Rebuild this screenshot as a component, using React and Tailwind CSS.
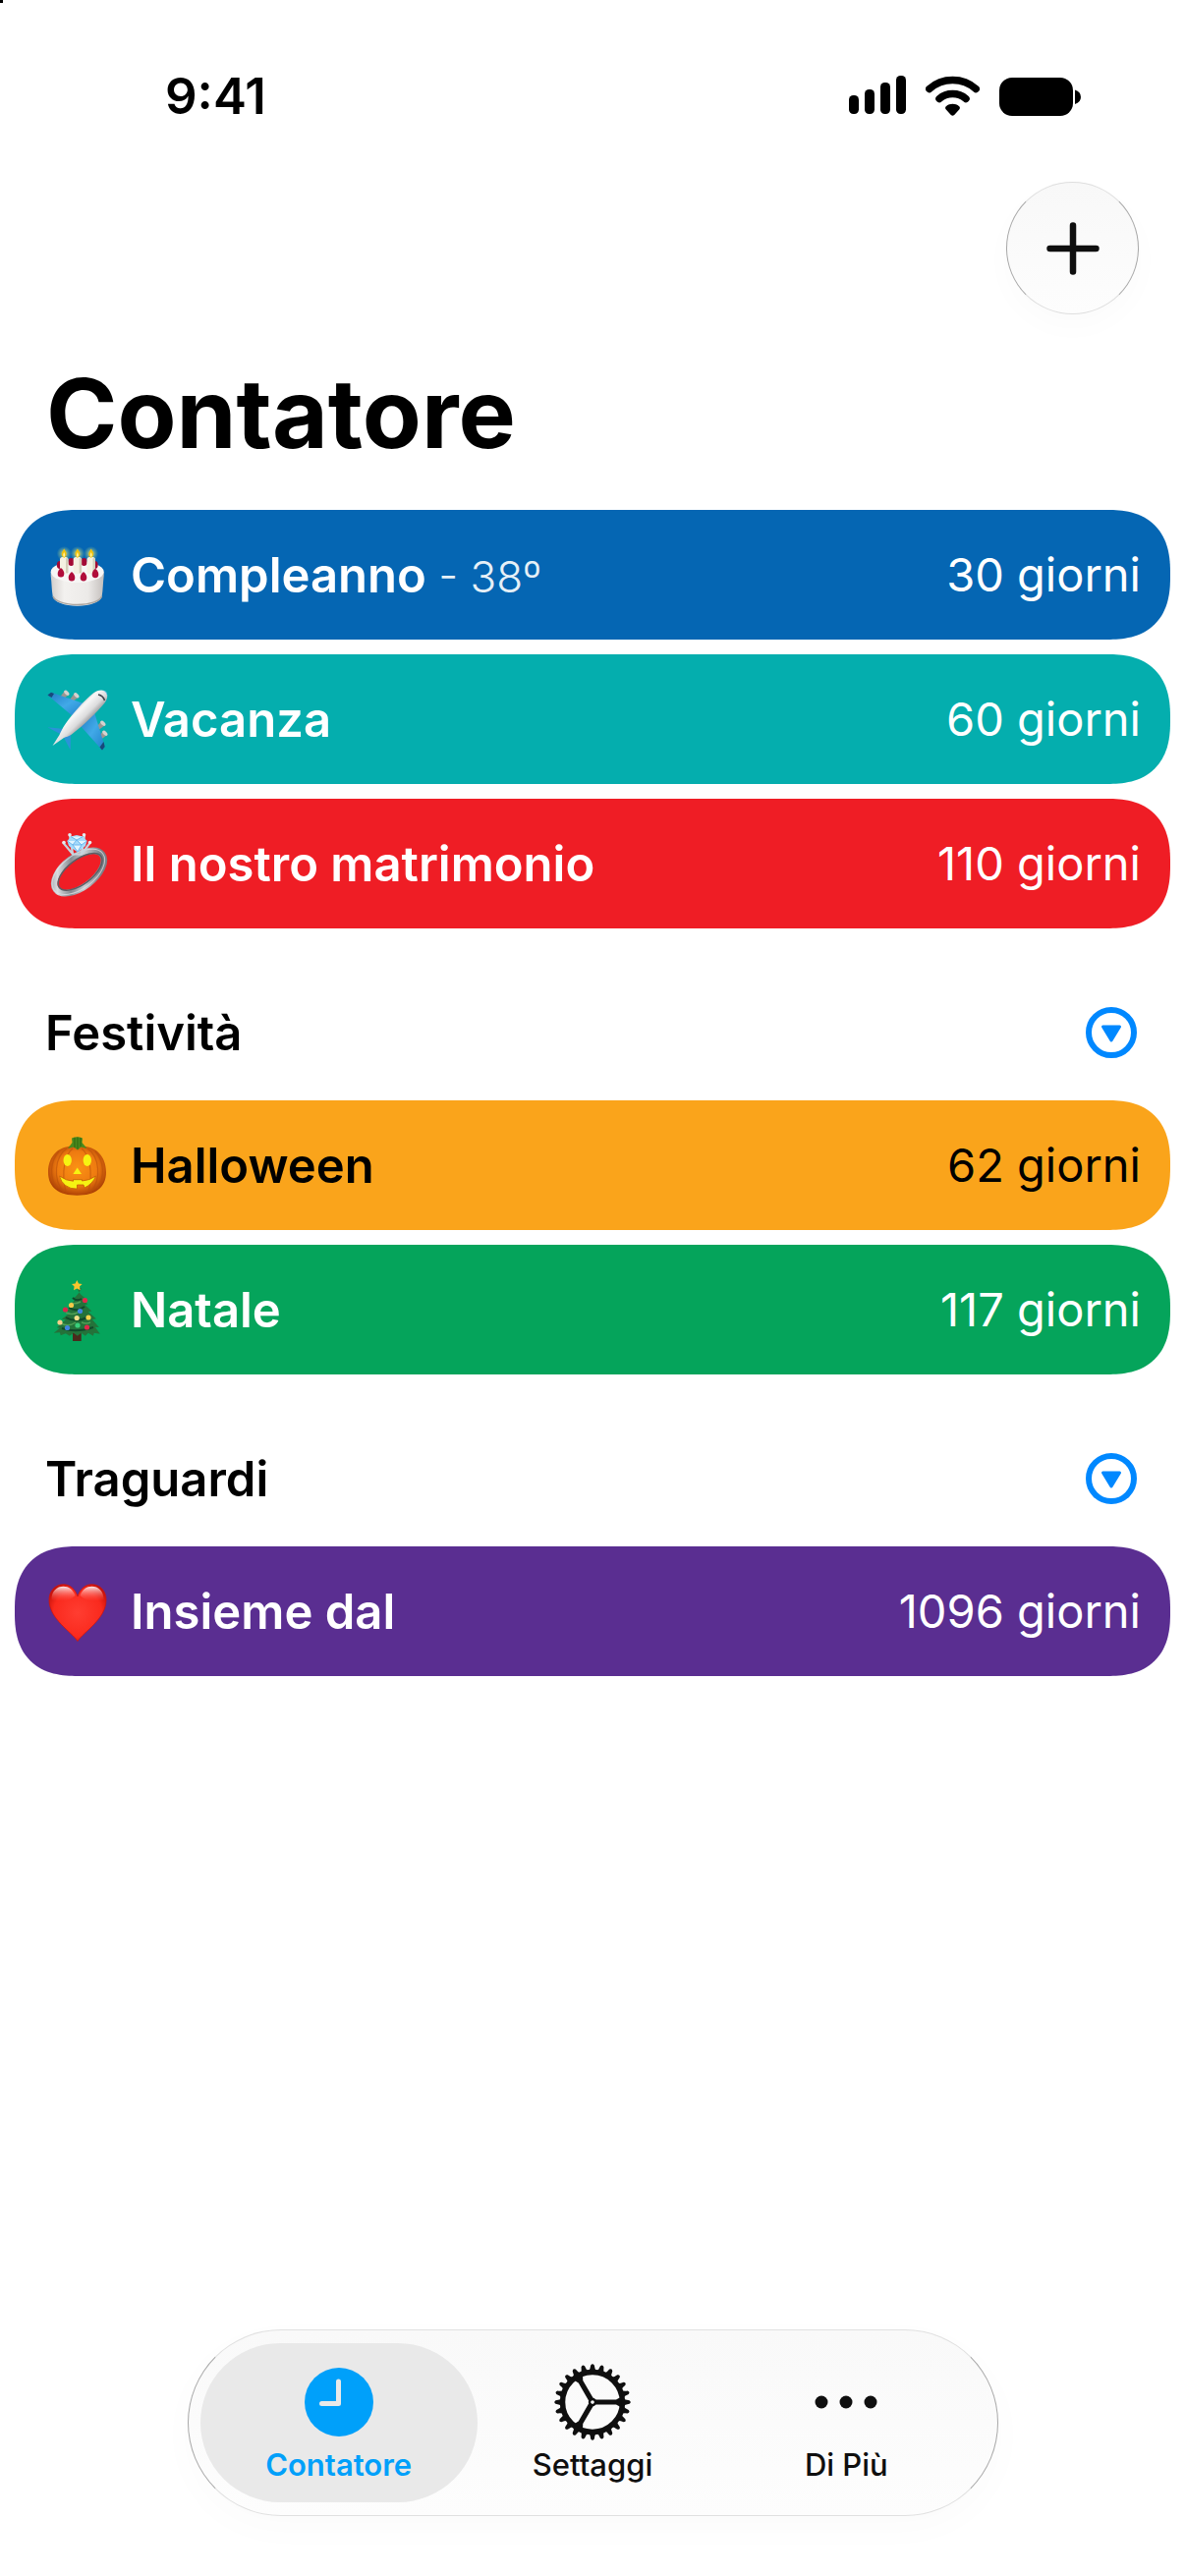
import React from "react";

function Cake() {
  return (
    <svg viewBox="0 0 62 68" className="h-[68px] w-[62px] shrink-0" aria-hidden="true">
      <defs>
        <linearGradient id="cakeSide" x1="0" x2="1">
          <stop offset="0" stopColor="#d2cecb" />
          <stop offset="0.25" stopColor="#f3f1ef" />
          <stop offset="0.7" stopColor="#eceae8" />
          <stop offset="1" stopColor="#c4bfbc" />
        </linearGradient>
        <radialGradient id="glow">
          <stop offset="0" stopColor="#fff27a" stopOpacity="0.9" />
          <stop offset="1" stopColor="#9fd08a" stopOpacity="0" />
        </radialGradient>
      </defs>
      <path d="M3.7 31v4c1 8 .8 14 2 21 1.200 6 12 9.700 25 9.700s23.800-3.700 25-9.700c1.200-7 1-13 2-21v-4z" fill="url(#cakeSide)" />
      <path d="M6 56c2 5 12 8.500 24.700 8.500S53.500 61 55.500 56" fill="none" stroke="#aaa49f" strokeWidth="1.500" />
      <ellipse cx="30.700" cy="31" rx="27" ry="11" fill="#f7f6f5" />
      {[[13, 24], [24.500, 21], [37.500, 21], [48.500, 24]].map(([x, y]) => (
        <ellipse key={x} cx={x} cy={y} rx="3.200" ry="4" fill="#a30a35" />
      ))}
      {[[13, 16], [26.700, 16], [40.500, 16]].map(([x, y]) => (
        <g key={x}>
          <circle cx={x + 4.200} cy="12.500" r="7.500" fill="url(#glow)" />
          <rect x={x} y={y} width="8.400" height="17" rx="2.500" fill="#f4f1e2" />
          <rect x={x + 6} y={y + 1} width="2.400" height="15.500" rx="1.200" fill="#d4cfbb" />
          <path d={`M${x + 4.200} 7.500q5 7 0 9.500q-5-2.500 0-9.500`} fill="#f3c20c" />
          <path d={`M${x + 4.200} 11q2 3.500 0 5q-2-1.500 0-5`} fill="#fff3a0" />
        </g>
      ))}
      {[[14, 32.500], [25, 36.500], [37, 36.500], [49, 33.300]].map(([x, y]) => (
        <path key={x} d={`M${x} ${y - 5.500}c2.500 2 3.300 4 3.300 6a3.300 3.500 0 0 1-6.600 0c0-2 .8-4 3.300-6`} fill="#b00d3a" />
      ))}
    </svg>
  );
}

function Plane() {
  return (
    <svg viewBox="0 0 62 68" className="h-[68px] w-[62px] shrink-0" aria-hidden="true">
      <defs>
        <linearGradient id="fuselage" x1="0.300" y1="0.300" x2="0.650" y2="0.650">
          <stop offset="0" stopColor="#a9a9ab" />
          <stop offset="0.350" stopColor="#f7f7f7" />
          <stop offset="0.650" stopColor="#dcdcdd" />
          <stop offset="1" stopColor="#77787c" />
        </linearGradient>
        <linearGradient id="wing" x1="0" y1="0" x2="1" y2="1">
          <stop offset="0" stopColor="#1f7cc4" />
          <stop offset="0.500" stopColor="#41a9e8" />
          <stop offset="1" stopColor="#1d7fc8" />
        </linearGradient>
      </defs>
      {[[17, 10], [27, 12.500], [54, 41], [56, 51]].map(([x, y]) => (
        <g key={x} transform={`rotate(45 ${x} ${y})`}>
          <path d={`M${x - 3} ${y - 4.500}h6l-1.500 9h-3z`} fill="#9c9591" />
          <ellipse cx={x} cy={y - 4} rx="3.200" ry="1.800" fill="#d6d2cf" />
        </g>
      ))}
      <path d="M.5 9.500 4 6.800 40 19 26 31z" fill="url(#wing)" />
      <path d="M.5 9.500 4 6.800 7 8 4.500 12z" fill="#17497a" />
      <path d="M58.700 62 56 65.500 34 41 48 27z" fill="url(#wing)" />
      <path d="M58.700 62 56 65.500 53.500 62.500 57.500 57z" fill="#17497a" />
      <path d="M.5 42.200 18 44 15 50z" fill="#2b93d8" />
      <path d="M23.700 65.500 16 51l8-4z" fill="#2b93d8" />
      <path d="M60.500 7c1.500 3 .8 7-2 10.500C50 28 36 41 25 49.500c-3 2-6 2.500-8 3.500L5.500 61l7-11c1.500-3 3-7 6-11C26 28 38 15 47 7.500 51.500 4 58 3.500 60.500 7z" fill="url(#fuselage)" />
      <path d="M52 9q5 1 6.500 6" fill="none" stroke="#3d434c" strokeWidth="1.600" />
      <path d="M57 4.800q4.500 1 4.200 5.500q-1-4-4.200-5.500" fill="#4ab2ea" />
    </svg>
  );
}

function Ring() {
  return (
    <svg viewBox="0 0 62 68" className="h-[68px] w-[62px] shrink-0" aria-hidden="true">
      <defs>
        <linearGradient id="band" x1="0" y1="0" x2="1" y2="0.400">
          <stop offset="0" stopColor="#8b9098" />
          <stop offset="0.200" stopColor="#d9dcdf" />
          <stop offset="0.450" stopColor="#868b92" />
          <stop offset="0.700" stopColor="#c9ccd0" />
          <stop offset="1" stopColor="#7b8087" />
        </linearGradient>
      </defs>
      <g transform="rotate(-37 32.500 42.500)">
        <ellipse cx="32.500" cy="42.500" rx="29.500" ry="15.500" fill="none" stroke="url(#band)" strokeWidth="6.500" />
        <ellipse cx="33.500" cy="43" rx="26.500" ry="12.500" fill="none" stroke="#5a5f66" strokeWidth="1.500" />
        <ellipse cx="32" cy="42" rx="31" ry="17" fill="none" stroke="#e3e6e9" strokeWidth="1" opacity="0.700" />
      </g>
      <path d="M16.500 13 26 24.500h9L43.500 13M23 5l3 19M38 5l-3 19" fill="none" stroke="#c7d3dc" strokeWidth="2.200" strokeLinecap="round" />
      <path d="M20.500 11 24 6.500 30 5l6.500 1.500L40.500 11l-1.500 5-8 6.500-9-6.500z" fill="#a5dbfb" />
      <path d="M24 6.500 30 10l6.500-3.500M20.500 11l5.500 4 4-5 5 5 5.500-4M26 15l5 7 4-7z" fill="#e2f5ff" stroke="#6db7ee" strokeWidth="1" />
      {[[17, 12.500], [23, 4.800], [37.500, 4.800], [43.500, 12.500]].map(([x, y]) => (
        <circle key={x} cx={x} cy={y} r="1.800" fill="#e4eaee" />
      ))}
    </svg>
  );
}

function Pumpkin() {
  return (
    <svg viewBox="0 0 62 68" className="h-[68px] w-[62px] shrink-0" aria-hidden="true">
      <defs>
        <radialGradient id="pumpkin" cx="0.500" cy="0.450" r="0.580">
          <stop offset="0" stopColor="#fb9214" />
          <stop offset="0.600" stopColor="#ee7a10" />
          <stop offset="1" stopColor="#a63a04" />
        </radialGradient>
      </defs>
      <path d="M30.500 15.500C44 12 60 21 60 41c0 16-11 23.700-29.500 23.700S1 57 1 41C1 21 17 12 30.500 15.500z" fill="url(#pumpkin)" />
      <path d="M20 17C8 25 5 48 17 62M41 17c12 8 15 31 3 45M26 17c-8 6-12 24-7 44M35 17c8 6 12 24 7 44M12 20C3 30 2 46 10 58M49 20c9 10 10 26 2 38" fill="none" stroke="#b9500a" strokeWidth="1.200" opacity="0.600" />
      <path d="M25 6.500q5.500-2.500 11 0l-.5 4.500 5 6-6-1.500-3.500 3-4-3-6 1.500 4.500-6z" fill="#4b8a1c" />
      <path d="M28 6v10M31 5.500v12M34 6v9" stroke="#2f6410" strokeWidth="1" />
      <ellipse cx="20.700" cy="29" rx="4.200" ry="6" fill="#f6f312" />
      <ellipse cx="40.800" cy="29" rx="4.200" ry="6" fill="#f6f312" />
      <path d="M30.700 36.500 35 43h-8.600z" fill="#f6f312" />
      <path d="M12.500 45q7 5 14 5.200v-1.500h9v1.300q8-.5 14-5q-3 8-11.500 12l-1-3h-6.500v4q-7 .5-12-3.500-4.500-3.500-6-9.500" fill="#f6f312" stroke="#c45d06" strokeWidth="0.800" />
    </svg>
  );
}

function Tree() {
  const baubles = [
    [38.500, 24.500, "#e2284a"], [24.500, 29.500, "#f4c84a"], [18.500, 34, "#d8284a"], [33.500, 35.500, "#3f84e0"],
    [30.200, 42.500, "#f6e08a"], [42, 42, "#f4d34a"], [13, 47, "#f6cf8a"], [20.500, 52.500, "#3f84e0"], [40.500, 52, "#e2284a"], [31, 50, "#39d07a"],
  ];
  return (
    <svg viewBox="0 0 62 68" className="h-[68px] w-[62px] shrink-0" aria-hidden="true">
      <rect x="26" y="55" width="8.700" height="11" fill="#4a2a1c" />
      <path d="M30.300 12c2 5 5 8 8 10l-2.500.5 5.500 6-3 .5 7 6.500-3.500.8 8 7-4 .7 7 8-4-.3 5 7-6-1-1 3-5-3-3 3-4-3-4 3-4-3-4 3-4-2.500-5 2-1-3-6 .5 6-5-3-.5 9-8-4-.5 9-7-4-1 7-6.500-3-.5 6-6-2.500-.5c3.500-3 6-6 7.500-10.200z" fill="#24723a" />
      <path d="M26 22q4 4 9 1M22 32q8 5 16-1M19 42q10 6 24-1M15 53q14 5 32-1" fill="none" stroke="#11482a" strokeWidth="2" />
      <path d="M24 27q4 2 10-1M19 37q6 3 12 0M14 48q8 4 15-1M35 47q5 2 9 0" fill="none" stroke="#4f9f55" strokeWidth="1.500" />
      <path d="m30.300 4 1.700 3.400 3.600.5-2.600 2.600.6 3.700-3.300-1.700-3.300 1.700.6-3.700L25 7.900l3.600-.5z" fill="#fbc52d" />
      {baubles.map(([x, y, fill]) => (
        <circle key={`${x}-${y}`} cx={x} cy={y} r="2.600" fill={fill} />
      ))}
    </svg>
  );
}

function Heart() {
  return (
    <svg viewBox="0 0 62 68" className="h-[68px] w-[62px] shrink-0" aria-hidden="true">
      <defs>
        <radialGradient id="heart" cx="0.500" cy="0.500" r="0.600">
          <stop offset="0" stopColor="#ff3d31" />
          <stop offset="0.700" stopColor="#fa2a1e" />
          <stop offset="1" stopColor="#c20f08" />
        </radialGradient>
        <linearGradient id="heartShine" x1="0" y1="0" x2="0" y2="1">
          <stop offset="0" stopColor="#fff" stopOpacity="0.900" />
          <stop offset="1" stopColor="#ff5a4e" stopOpacity="0" />
        </linearGradient>
      </defs>
      <path d="M31 64.500C25 55 2 42 2 22.500 2 13 8.500 6.700 16.500 6.700 23 6.700 28.500 11 31 19 33.500 11 39 6.700 45.500 6.700 53.500 6.700 60 13 60 22.500 60 42 37 55 31 64.500z" fill="url(#heart)" stroke="#cf150c" strokeWidth="0.800" />
      <path d="M4.500 22C4.500 13.500 10 8.800 16.500 8.800c5.500 0 9.500 3 12 9.200C23 24 10 25 4.500 22zM33.500 18c2.500-6.200 6.500-9.200 12-9.200 6.500 0 12 4.700 12 13.200C52 25 39 24 33.500 18z" fill="url(#heartShine)" />
    </svg>
  );
}

function EventRow({ icon, name, note, days, tone }) {
  return (
    <li>
      <button
        type="button"
        className={`flex h-[132px] w-full items-center rounded-[64px] pr-[30px] pl-[33px] text-left [corner-shape:superellipse(1.3)] ${tone}`}
      >
        {icon}
        <span className="ml-[23px] flex-1 pt-[2px] text-[49px] font-semibold whitespace-nowrap">
          {name}
          {note && <span className="text-[44px] font-light opacity-90"> - {note}</span>}
        </span>
        <span className="text-[47px] whitespace-nowrap">{days} giorni</span>
      </button>
    </li>
  );
}

function SectionHeader({ title }) {
  return (
    <div className="flex h-[175px] items-center justify-between pt-9 pr-[34px] pl-[31px]">
      <h2 className="pt-[2px] text-[49px] font-semibold">{title}</h2>
      <button type="button" aria-label={`Comprimi ${title}`} className="size-[52px]">
        <svg viewBox="0 0 52 52" className="size-full">
          <circle cx="26" cy="26" r="23" fill="none" stroke="#0088ff" strokeWidth="6" />
          <path d="M17.500 20h17L26 34z" fill="#0088ff" stroke="#0088ff" strokeWidth="3" strokeLinejoin="round" />
        </svg>
      </button>
    </div>
  );
}

function StatusBar() {
  return (
    <header className="flex h-[119px] items-end justify-between pr-[106px] pl-[168px]">
      <time className="text-[51px] leading-[42px] font-semibold">9:41</time>
      <div className="flex items-end gap-5">
        <svg viewBox="0 0 58 42" className="h-[42px] w-[58px]" aria-label="Segnale">
          <rect x="0" y="20" width="10" height="19" rx="4.500" />
          <rect x="16" y="14" width="10" height="25" rx="4.500" />
          <rect x="32" y="7" width="10" height="32" rx="4.500" />
          <rect x="48" y="0" width="10" height="39" rx="4.500" />
        </svg>
        <svg viewBox="0 0 55 42" className="h-[42px] w-[55px]" aria-label="Wi-Fi">
          <path d="M3.800 13.500C17 1.500 38 1.500 51.200 13.500M14 23.500c7.500-6.700 19.500-6.700 27 0" fill="none" stroke="#000" strokeWidth="7.500" strokeLinecap="round" />
          <path d="M20.800 31.200c4-3.200 9.400-3.200 13.400 0 1 1 .9 2.200 0 3.200l-5 5.500q-1.700 1.500-3.400 0l-5-5.500c-.9-1-1-2.200 0-3.200z" />
        </svg>
        <svg viewBox="0 0 83 42" className="h-[42px] w-[83px]" aria-label="Batteria">
          <rect x="0" y="2" width="75" height="39" rx="13" />
          <path d="M77 14.500q6 2 6 7.300t-6 7.300z" />
        </svg>
      </div>
    </header>
  );
}

function Gear() {
  return (
    <svg viewBox="-39 -39 78 78" className="size-[78px]" aria-hidden="true">
      <circle r="30.500" fill="none" stroke="#0f0f0f" strokeWidth="5.500" />
      {Array.from({ length: 24 }, (_, i) => (
        <path key={i} transform={`rotate(${i * 15})`} d="M-4.300-31Q-2.300-33-1.800-37.500Q0-40 1.800-37.500Q2.300-33 4.300-31Z" fill="#0f0f0f" />
      ))}
      {[90, 210, 330].map((a) => (
        <path key={a} transform={`rotate(${a})`} d="M-2.600-3-2.600-24-5.500-29.500h11L2.600-24 2.600-3Z" fill="#0f0f0f" />
      ))}
      <circle r="3" fill="#fdfdfd" stroke="#0f0f0f" strokeWidth="2.400" />
    </svg>
  );
}

function Tab({ icon, label, active }) {
  return (
    <button
      type="button"
      aria-current={active ? "page" : undefined}
      className={`-mx-3 flex flex-col items-center rounded-[81px] pt-[21px] pb-4 ${
        active ? "bg-[#e9e9e9] font-semibold text-[#00a0fa]" : "font-medium text-[#0f0f0f]"
      }`}
    >
      <span className="flex h-[78px] items-center">{icon}</span>
      <span className="mt-[2px] text-[31px] leading-[45px]">{label}</span>
    </button>
  );
}

export default function App() {
  return (
    <div className="relative flex min-h-screen flex-col bg-white font-['Inter',sans-serif] text-black">
      <span className="absolute top-0 left-0 size-[3px] bg-black" />
      <StatusBar />
      <div className="flex justify-end pt-[66px] pr-[47px]">
        <button
          type="button"
          aria-label="Aggiungi"
          className="flex size-[135px] items-center justify-center rounded-full border border-[#a8a8a8] border-t-[#dedede] border-b-[#dedede] bg-linear-to-b from-[#f8f8f8] to-[#fdfdfd] shadow-[0_12px_32px_rgba(0,0,0,0.02)]"
        >
          <svg viewBox="0 0 54 54" className="size-[54px]" aria-hidden="true">
            <path d="M27 3.500v47M3.500 27h47" fill="none" stroke="#0f0f0f" strokeWidth="6.500" strokeLinecap="round" />
          </svg>
        </button>
      </div>
      <h1 className="mt-[41px] ml-[47px] text-[98px] leading-[120px] font-bold">Contatore</h1>
      <main className="mt-[38px] px-[15px]">
        <ul className="flex flex-col gap-[15px]">
          <EventRow icon={<Cake />} name="Compleanno" note="38º" days="30" tone="bg-[#0566b3] text-white" />
          <EventRow icon={<Plane />} name="Vacanza" days="60" tone="bg-[#04aeae] text-white" />
          <EventRow icon={<Ring />} name="Il nostro matrimonio" days="110" tone="bg-[#ef1d25] text-white" />
        </ul>
        <SectionHeader title="Festività" />
        <ul className="flex flex-col gap-[15px]">
          <EventRow icon={<Pumpkin />} name="Halloween" days="62" tone="bg-[#faa41b] text-black" />
          <EventRow icon={<Tree />} name="Natale" days="117" tone="bg-[#05a45b] text-white" />
        </ul>
        <SectionHeader title="Traguardi" />
        <ul className="flex flex-col gap-[15px]">
          <EventRow icon={<Heart />} name="Insieme dal" days="1096" tone="bg-[#5a2e91] text-white" />
        </ul>
      </main>
      <nav className="mx-auto mt-auto mb-[61px] grid w-[825px] max-w-full grid-cols-3 rounded-[95px] border border-x-[#a8a8a8] border-y-[#e0e0e0] bg-linear-to-b from-[#f9f9f9] to-[#fdfdfd] px-6 py-[13px] shadow-[0_12px_40px_rgba(0,0,0,0.02)]">
        <Tab
          active
          label="Contatore"
          icon={
            <svg viewBox="0 0 70 70" className="size-[70px]" aria-hidden="true">
              <circle cx="35" cy="35" r="35" fill="#00a0fa" />
              <path d="M34.500 14v22.500H17.500" fill="none" stroke="#e9e9e9" strokeWidth="5" strokeLinecap="round" strokeLinejoin="round" />
            </svg>
          }
        />
        <Tab label="Settaggi" icon={<Gear />} />
        <Tab
          label="Di Più"
          icon={
            <svg viewBox="0 0 64 14" className="h-[14px] w-[64px]" aria-hidden="true">
              <circle cx="7" cy="7" r="6.500" fill="#0f0f0f" />
              <circle cx="32" cy="7" r="6.500" fill="#0f0f0f" />
              <circle cx="57" cy="7" r="6.500" fill="#0f0f0f" />
            </svg>
          }
        />
      </nav>
    </div>
  );
}
